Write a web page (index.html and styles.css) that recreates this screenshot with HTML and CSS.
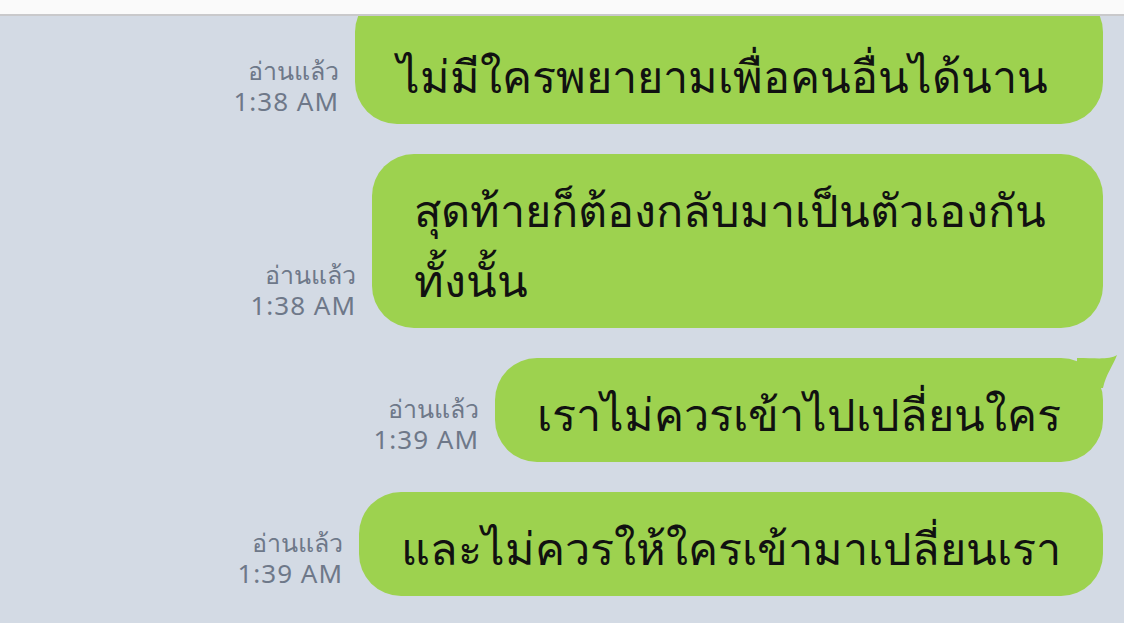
FILE: index.html
```html
<!DOCTYPE html>
<html lang="th">
<head>
    <meta charset="UTF-8">
    <meta name="viewport" content="width=device-width, initial-scale=1.0">
    <title>LINE</title>
    <link rel="stylesheet" href="styles.css">
</head>
<body>
    <div class="topbar"></div>
    <div class="chat">
        <div class="row">
            <div class="meta">
                <span class="read">อ่านแล้ว</span>
                <span class="time">1:38 AM</span>
            </div>
            <div class="bubble first">ไม่มีใครพยายามเพื่อคนอื่นได้นาน</div>
        </div>
        <div class="row">
            <div class="meta">
                <span class="read">อ่านแล้ว</span>
                <span class="time">1:38 AM</span>
            </div>
            <div class="bubble wide">สุดท้ายก็ต้องกลับมาเป็นตัวเองกัน<br>ทั้งนั้น</div>
        </div>
        <div class="row">
            <div class="meta">
                <span class="read">อ่านแล้ว</span>
                <span class="time">1:39 AM</span>
            </div>
            <div class="bubble">
                เราไม่ควรเข้าไปเปลี่ยนใคร
                <svg class="tip" width="50" height="40" viewBox="0 0 50 40">
                    <path d="M8 6 C28 6 40 8 48 3 C44 14 37 22 34 36 L8 36 Z" fill="#9dd24f"/>
                </svg>
            </div>
        </div>
        <div class="row">
            <div class="meta">
                <span class="read">อ่านแล้ว</span>
                <span class="time">1:39 AM</span>
            </div>
            <div class="bubble">และไม่ควรให้ใครเข้ามาเปลี่ยนเรา</div>
        </div>
    </div>
</body>
</html>
```

FILE: styles.css
```css
body{
    margin: 0;
    background-color: #d3dae4;
    font-family: "Noto Sans", "DejaVu Sans", sans-serif;
    overflow: hidden;
    height: 623px;
}
.topbar{
    position: absolute;
    top: 0;
    left: 0;
    right: 0;
    height: 14px;
    background-color: #fafafa;
    border-bottom: 2px solid #c9c9cb;
    z-index: 2;
}
.chat{
    display: flex;
    flex-direction: column;
    gap: 30px;
    margin-top: -10px;
    padding-right: 21px;
}
.row{
    display: flex;
    justify-content: flex-end;
    align-items: flex-end;
    gap: 16px;
}
.meta{
    display: flex;
    flex-direction: column;
    align-items: flex-end;
    padding-bottom: 7px;
    color: #6e7889;
    font-size: 26px;
    line-height: 31px;
    letter-spacing: 1px;
}
.read{
    font-size: 25px;
    letter-spacing: 0;
}
.bubble{
    position: relative;
    background-color: #9dd24f;
    color: #111;
    font-size: 45px;
    font-weight: 500;
    line-height: 70px;
    padding: 21px 42px 13px;
    border-radius: 42px;
}
.first{
    padding-top: 51px;
    padding-right: 55px;
}
.wide{
    min-width: 647px;
}
.tip{
    position: absolute;
    right: -16px;
    top: -6px;
}
```
